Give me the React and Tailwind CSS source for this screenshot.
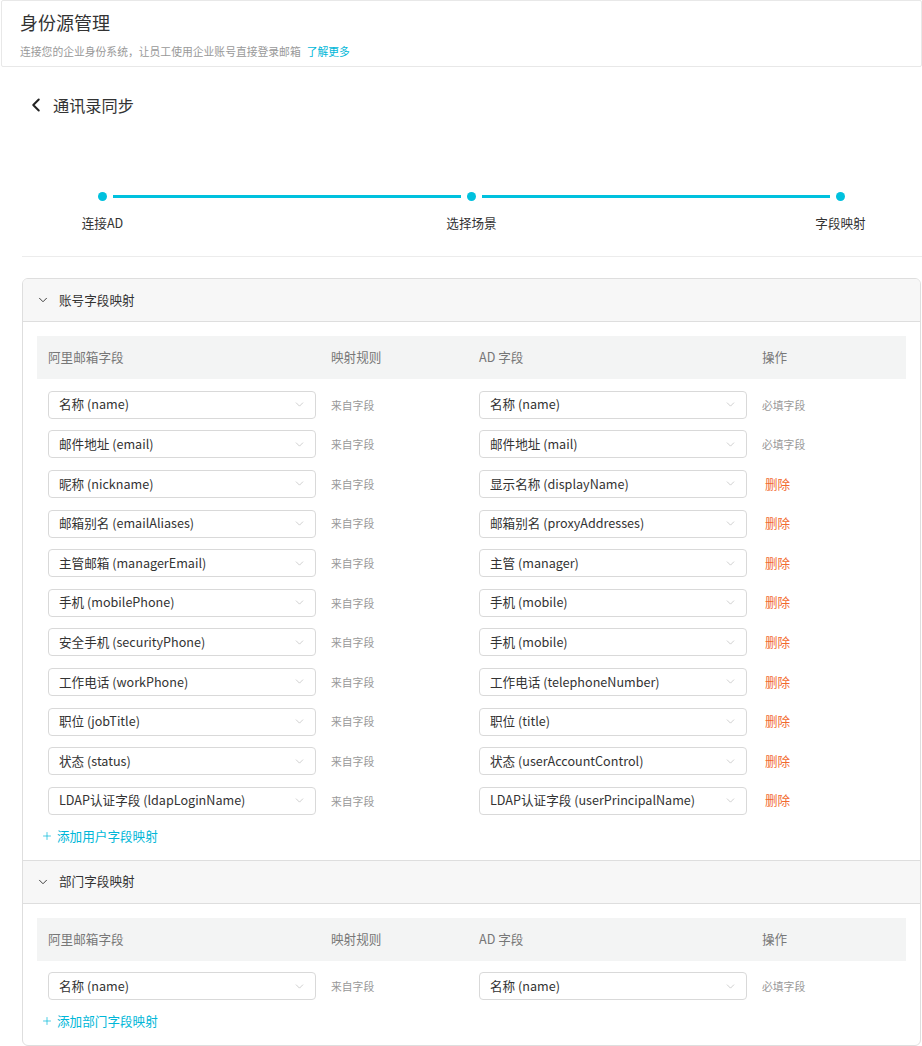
import { ChevronLeft, ChevronDown, Plus } from 'lucide-react';

const userFields = [
  { mail: '名称 (name)', ad: '名称 (name)', required: true },
  { mail: '邮件地址 (email)', ad: '邮件地址 (mail)', required: true },
  { mail: '昵称 (nickname)', ad: '显示名称 (displayName)' },
  { mail: '邮箱别名 (emailAliases)', ad: '邮箱别名 (proxyAddresses)' },
  { mail: '主管邮箱 (managerEmail)', ad: '主管 (manager)' },
  { mail: '手机 (mobilePhone)', ad: '手机 (mobile)' },
  { mail: '安全手机 (securityPhone)', ad: '手机 (mobile)' },
  { mail: '工作电话 (workPhone)', ad: '工作电话 (telephoneNumber)' },
  { mail: '职位 (jobTitle)', ad: '职位 (title)' },
  { mail: '状态 (status)', ad: '状态 (userAccountControl)' },
  { mail: 'LDAP认证字段 (ldapLoginName)', ad: 'LDAP认证字段 (userPrincipalName)' },
];

const deptFields = [{ mail: '名称 (name)', ad: '名称 (name)', required: true }];

const steps = ['连接AD', '选择场景', '字段映射'];

const Select = ({ value }) => (
  <div className="flex h-[28px] w-[268px] items-center justify-between rounded-[4px] border border-[#d9d9d9] bg-white pl-[10px] pr-[9px] text-[12.6px] text-[#333]">
    <span className="truncate">{value}</span>
    <ChevronDown className="h-[13px] w-[13px] text-[#b5b5b5]" strokeWidth={1.2} />
  </div>
);

const MappingTable = ({ rows, addLabel }) => (
  <div className="px-[14px] pb-[15px] pt-[14px]">
    <div className="grid h-[43px] grid-cols-[283px_148px_283px_1fr] items-center bg-[#f3f4f4] pl-[11px] text-[12.6px] text-[#777]">
      <span>阿里邮箱字段</span>
      <span>映射规则</span>
      <span>AD 字段</span>
      <span>操作</span>
    </div>
    <div className="mt-[6px]">
      {rows.map((row, i) => (
        <div
          key={i}
          className="grid h-[39.6px] grid-cols-[283px_148px_283px_1fr] items-center pl-[11px]"
        >
          <Select value={row.mail} />
          <span className="text-[10.8px] text-[#999]">来自字段</span>
          <Select value={row.ad} />
          {row.required ? (
            <span className="text-[10.8px] text-[#999]">必填字段</span>
          ) : (
            <span className="pl-[3px] text-[12.6px] text-[#f26a2e]">删除</span>
          )}
        </div>
      ))}
    </div>
    <div className="mt-[6px] flex items-center gap-[4px] pl-[4px] text-[12.6px] leading-[18px] text-[#00b7d8]">
      <Plus className="h-[12px] w-[12px]" strokeWidth={1.4} />
      <span>{addLabel}</span>
    </div>
  </div>
);

const PanelHeader = ({ title }) => (
  <div className="flex h-[42px] items-center gap-[9px] bg-[#f7f7f7] pl-[13px] text-[12.6px] text-[#333]">
    <ChevronDown className="h-[14px] w-[14px] text-[#333]" strokeWidth={1.6} />
    <span>{title}</span>
  </div>
);

export default function App() {
  return (
    <div className="min-h-[1046px] w-[922px] bg-white font-['Noto_Sans_CJK_SC','Noto_Sans',sans-serif] text-[#333]">
      <div className="ml-px h-[67px] rounded-[2px] border border-[#e8e8e8] px-[18px] pt-[8px]">
        <h1 className="text-[18px] leading-[26px] text-[#333]">身份源管理</h1>
        <p className="mt-[8px] text-[10.8px] leading-[16px] text-[#999]">
          连接您的企业身份系统，让员工使用企业账号直接登录邮箱
          <span className="ml-[6px] text-[#00b7d8]">了解更多</span>
        </p>
      </div>

      <div className="ml-[25px] mt-[26px] flex h-[24px] items-center gap-[6px]">
        <ChevronLeft className="h-[22px] w-[22px] text-[#222]" strokeWidth={2.2} />
        <span className="text-[16.2px] text-[#333]">通讯录同步</span>
      </div>

      <div className="ml-[22px] border-b border-[#ececec] pb-[24px] pt-[75px]">
        <div className="ml-[76px] w-[747px]">
          <div className="flex items-center">
            <span className="h-[9px] w-[9px] rounded-full bg-[#00c1de]" />
            <span className="mx-[6px] h-[3px] flex-1 bg-[#00c1de]" />
            <span className="h-[9px] w-[9px] rounded-full bg-[#00c1de]" />
            <span className="mx-[6px] h-[3px] flex-1 bg-[#00c1de]" />
            <span className="h-[9px] w-[9px] rounded-full bg-[#00c1de]" />
          </div>
          <div className="mt-[13px] flex justify-between">
            {steps.map((s) => (
              <div key={s} className="flex w-[9px] justify-center">
                <span className="whitespace-nowrap text-[12.6px] leading-[18px] text-[#333]">{s}</span>
              </div>
            ))}
          </div>
        </div>
      </div>

      <div className="ml-[22px] mr-px mt-[21px] overflow-hidden rounded-[6px] border border-[#dedede]">
        <PanelHeader title="账号字段映射" />
        <div className="border-t border-[#dedede]">
          <MappingTable rows={userFields} addLabel="添加用户字段映射" />
        </div>
        <div className="border-t border-[#dedede]">
          <PanelHeader title="部门字段映射" />
        </div>
        <div className="border-t border-[#dedede]">
          <MappingTable rows={deptFields} addLabel="添加部门字段映射" />
        </div>
      </div>
    </div>
  );
}
